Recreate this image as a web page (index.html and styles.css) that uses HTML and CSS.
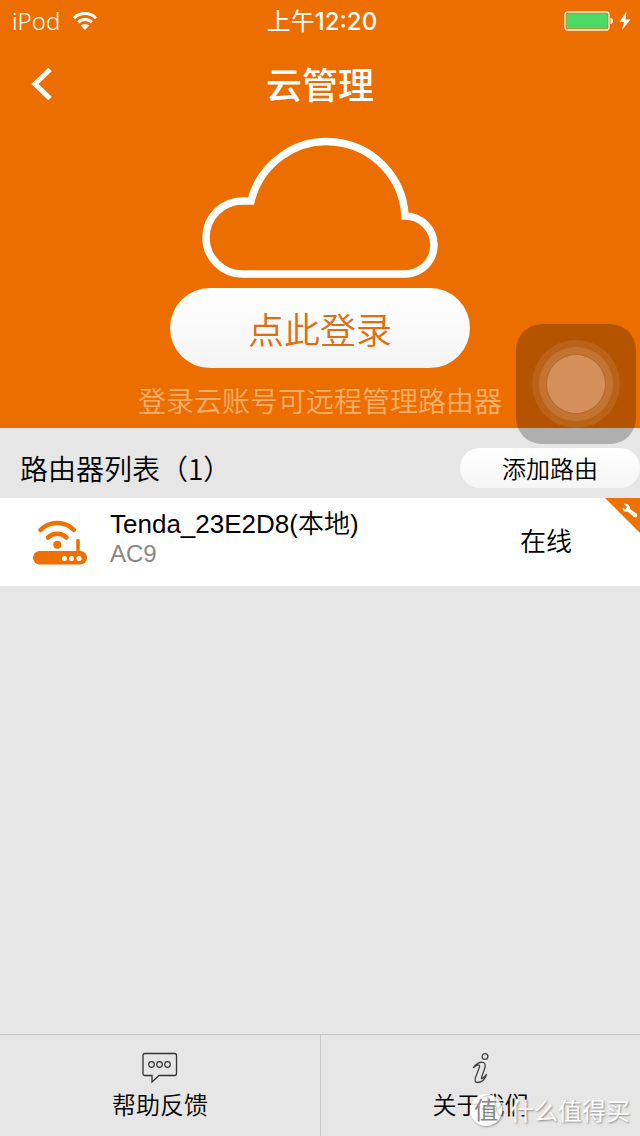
FILE: index.html
```html
<!DOCTYPE html>
<html lang="zh-CN">
<head>
<meta charset="utf-8">
<meta name="viewport" content="width=device-width, initial-scale=1">
<title>云管理</title>
<link rel="stylesheet" href="styles.css">
</head>
<body>
<div class="app">
  <header class="hero">
    <div class="status">
      <div class="status-left">
        <span>iPod</span>
        <svg class="wifi" width="26" height="20" viewBox="0 0 26 20" aria-hidden="true">
          <g fill="none" stroke="#fff" stroke-width="3">
            <path d="M2 7.200a15.500 15.500 0 0 1 22 0"/>
            <path d="M6.300 11.400a9.400 9.400 0 0 1 13.400 0"/>
          </g>
          <path d="M13 19l-4.200-4.400a6 6 0 0 1 8.400 0z" fill="#fff"/>
        </svg>
      </div>
      <div class="status-time">上午<b>12:20</b></div>
      <div class="status-right">
        <svg width="68" height="22" viewBox="0 0 68 22" aria-hidden="true">
          <rect x="1" y="2" width="44" height="18" rx="2.500" fill="none" stroke="#fff" stroke-opacity=".9" stroke-width="1.300"/>
          <rect x="2.500" y="3.500" width="41" height="15" rx="1" fill="#4cd964"/>
          <path d="M46.500 8h1q1.500 1 1.500 3t-1.500 3h-1z" fill="#fff"/>
          <path d="M62.500 1.500L55.500 12h4.500l-2 8L66.500 9.500h-5z" fill="#fff"/>
        </svg>
      </div>
    </div>
    <nav class="nav">
      <button class="back" type="button" aria-label="返回">
        <svg width="24" height="36" viewBox="0 0 24 36" aria-hidden="true"><path d="M20 3.500L5 18l15 14.500" fill="none" stroke="#fff" stroke-width="5"/></svg>
      </button>
      <h1 class="title">云管理</h1>
    </nav>
    <div class="login">
      <svg class="cloud" width="240" height="144" viewBox="200 136 240 144" aria-hidden="true">
        <path d="M405 216A29 29 0 0 1 405 274H242.500A36.500 36.500 0 0 1 242.500 201H251A78.200 78.200 0 0 1 405 216Z" fill="none" stroke="#fff" stroke-width="7.500"/>
      </svg>
      <button class="login-btn" type="button">点此登录</button>
      <p class="hint">登录云账号可远程管理路由器</p>
    </div>
    <button class="assist" type="button" aria-label="辅助触控"><span class="assist-ring"><span class="assist-mid"><span class="assist-dot"></span></span></span></button>
  </header>

  <main class="main">
    <div class="list-head">
      <h2 class="list-title">路由器列表（1）</h2>
      <button class="add" type="button">添加路由</button>
    </div>
    <ul class="list">
      <li>
        <a class="router" href="#router">
          <svg class="router-icon" width="56" height="48" viewBox="32 518 56 48" aria-hidden="true">
            <rect x="33" y="551" width="54" height="13.500" rx="6.500" fill="#ed7000"/>
            <path d="M78 553V540.500" stroke="#ed7000" stroke-width="3.500" stroke-linecap="round"/>
            <circle cx="57.300" cy="544.700" r="4" fill="#ed7000"/>
            <g fill="none" stroke="#ed7000" stroke-width="4.500" stroke-linecap="round">
              <path d="M40.500 530a23.500 23.500 0 0 1 33.500 0"/>
              <path d="M48 537.500a13.500 13.500 0 0 1 18.500 0"/>
            </g>
            <g fill="#fff"><circle cx="64.500" cy="558.500" r="2.500"/><circle cx="71.500" cy="558.500" r="2.500"/><circle cx="79" cy="558.500" r="2.500"/></g>
          </svg>
          <span class="router-text">
            <span class="router-name">Tenda_23E2D8(本地)</span>
            <span class="router-model">AC9</span>
          </span>
          <span class="router-state">在线</span>
          <svg class="ribbon" width="35" height="35" viewBox="0 0 35 35" aria-hidden="true">
            <path d="M0 0H35V35Z" fill="#ed7000"/>
            <path d="M19 6C22.500 5 25.500 7.500 25 11L31.500 15.500C33.500 17.500 31.500 20.500 29 19L22.500 13.500C20 14.500 17.500 12.500 17.500 10L20.500 11L22 9Z" fill="#fff"/>
          </svg>
        </a>
      </li>
    </ul>
  </main>

  <footer class="tabs">
    <a class="tab" href="#help">
      <svg width="36" height="32" viewBox="0 0 36 32" fill="none" stroke="#333" aria-hidden="true">
        <path d="M3 1.500H32.500Q34.500 1.500 34.500 3.500V21.500Q34.500 23.500 32.500 23.500H17L10 30V23.500H3Q1 23.500 1 21.500V3.500Q1 1.500 3 1.500Z" stroke-width="1.300"/>
        <g stroke-width="1.200"><circle cx="9.500" cy="12.500" r="2.800"/><circle cx="17.500" cy="12.500" r="2.800"/><circle cx="25.500" cy="12.500" r="2.800"/></g>
      </svg>
      <span>帮助反馈</span>
    </a>
    <a class="tab" href="#about">
      <svg width="36" height="32" viewBox="0 0 36 32" fill="none" stroke="#444" stroke-width="1.300" stroke-linejoin="round" stroke-linecap="round" aria-hidden="true">
        <circle cx="22" cy="4.500" r="2.900"/>
        <path d="M10.500 15.500C13.500 11.500 17 9.500 20.500 10.500C23 11.500 22.500 14 21.500 17L18.500 25.500C18 27.500 20 27 23.500 22.500C22 27.500 19 30.500 14.500 30.500C12 30.500 11.500 28 12.500 25.500L16.500 15C17 12.500 15 12 10.500 15.500Z"/>
      </svg>
      <span>关于我们</span>
    </a>
    <div class="watermark"><span class="watermark-logo">值</span><span class="watermark-text">什么值得买</span></div>
  </footer>
</div>
</body>
</html>
```

FILE: styles.css
```css
* { box-sizing: border-box; }

body {
  margin: 0;
  background: #e6e6e6;
  color: #000;
  font-family: "Liberation Sans", "Noto Sans CJK SC", sans-serif;
  font-weight: 350;
}

h1, h2, p, ul { margin: 0; padding: 0; }
ul { list-style: none; }
a { color: inherit; text-decoration: none; }
svg { display: block; flex: none; }

button {
  border: 0;
  padding: 0;
  color: inherit;
  font: inherit;
  cursor: pointer;
}

.app {
  min-height: 100vh;
  display: flex;
  flex-direction: column;
}

.hero {
  position: relative;
  background: #ed6e00;
  color: #fff;
}

.status {
  height: 40px;
  padding: 0 8px 0 12px;
  display: grid;
  grid-template-columns: 1fr auto 1fr;
  align-items: center;
  font: 400 24px/40px Inter, "Noto Sans CJK SC", sans-serif;
}

.status-left {
  display: flex;
  align-items: center;
  gap: 12px;
  font-family: "Noto Sans", sans-serif;
  font-weight: 300;
}

.status-time { padding-top: 2px; }
.status-time b { font-weight: 500; }
.status-right { display: flex; justify-content: flex-end; }

.nav {
  height: 88px;
  display: grid;
  grid-template-columns: 88px 1fr 88px;
  align-items: center;
}

.back {
  height: 88px;
  display: flex;
  align-items: center;
  padding-left: 30px;
  background: none;
}

.title {
  padding-bottom: 2px;
  text-align: center;
  font: 500 36px/48px "Noto Sans CJK SC", sans-serif;
}

.login {
  display: flex;
  flex-direction: column;
  align-items: center;
  gap: 8px;
  padding-top: 8px;
}

.login-btn {
  width: 300px;
  height: 80px;
  border-radius: 40px;
  background: linear-gradient(#fff, #f4f4f4);
  color: #dc6f10;
  font: 350 36px/76px "Noto Sans CJK SC", sans-serif;
}

.hint {
  padding-bottom: 4px;
  color: #f9ae6b;
  font-size: 28px;
  line-height: 48px;
  font-family: "Noto Sans CJK SC", sans-serif;
}

.assist {
  position: absolute;
  right: 4px;
  bottom: -16px;
  width: 120px;
  height: 120px;
  border-radius: 26px;
  background: rgba(0, 0, 0, .24);
  display: grid;
  place-items: center;
}

.assist span { display: grid; place-items: center; border-radius: 50%; }
.assist-ring { width: 88px; height: 88px; background: rgba(255, 255, 255, .09); }
.assist-mid { width: 74px; height: 74px; background: rgba(255, 255, 255, .12); }
.assist-dot { width: 58px; height: 58px; background: #d49058; box-shadow: 0 0 0 1px #b7692a; }

.main { flex: 1; }

.list-head {
  height: 70px;
  padding: 10px 0 0 20px;
  display: flex;
  align-items: center;
  justify-content: space-between;
}

.list-title { font: 350 28px/40px "Noto Sans CJK SC", sans-serif; }

.add {
  width: 180px;
  height: 40px;
  border-radius: 20px;
  background: linear-gradient(#fff, #f5f5f5);
  font: 350 24px/40px "Noto Sans CJK SC", sans-serif;
}

.router {
  position: relative;
  height: 88px;
  padding: 0 68px 0 32px;
  display: flex;
  align-items: center;
  background: #fff;
}

.router-text {
  flex: 1;
  padding: 0 16px 8px 22px;
  display: flex;
  flex-direction: column;
}

.router-name { font-size: 26px; line-height: 32px; }
.router-model { color: #888; font-size: 24px; line-height: 28px; }
.router-state { font-size: 26px; line-height: 36px; }

.ribbon {
  position: absolute;
  top: 0;
  right: 0;
}

.tabs {
  position: relative;
  display: grid;
  grid-template-columns: 1fr 1fr;
  border-top: 1px solid #c8c8c8;
}

.tab {
  height: 101px;
  padding-top: 17px;
  display: flex;
  flex-direction: column;
  align-items: center;
  font: 350 24px/40px "Noto Sans CJK SC", sans-serif;
}

.tab + .tab { border-left: 1px solid #c8c8c8; }

.watermark {
  position: absolute;
  right: 10px;
  bottom: 8px;
  display: flex;
  align-items: center;
  gap: 8px;
  color: #fff;
  font: 400 24px/36px "Noto Sans CJK SC", sans-serif;
  text-shadow: 1px 1px 2px #888;
  pointer-events: none;
}

.watermark-logo {
  width: 32px;
  height: 32px;
  border-radius: 50%;
  background: rgba(255, 255, 255, .85);
  box-shadow: 1px 1px 2px #999;
  color: #888;
  font-size: 24px;
  line-height: 30px;
  text-align: center;
  text-shadow: none;
}
```
